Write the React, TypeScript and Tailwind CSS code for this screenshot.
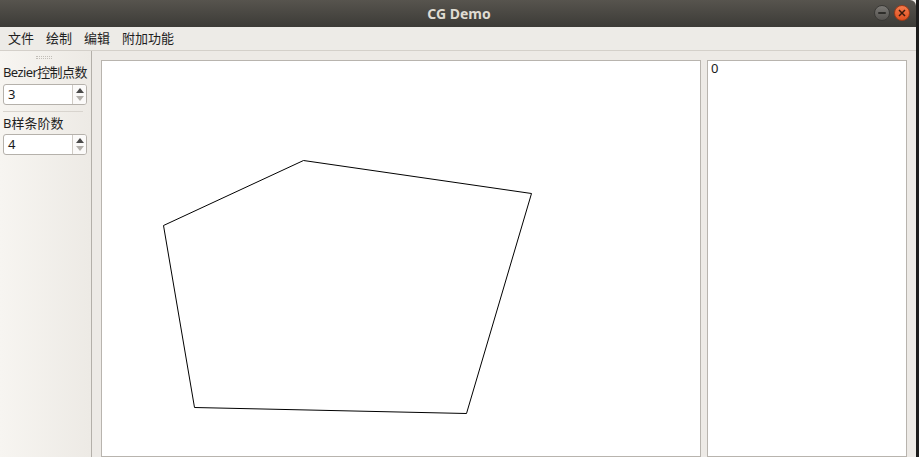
import React from "react";

const font = { fontFamily: '"Noto Sans", "Noto Sans CJK SC", sans-serif' };

function SpinBox({ value }: { value: string }) {
  return (
    <div className="flex h-[21px] w-[84px] rounded-[3px] border border-[#b5b1ab] bg-white overflow-hidden">
      <div className="flex-1 flex items-center pl-[4px] text-[13px] text-[#1a1a1a]">{value}</div>
      <div className="w-[14px] border-l border-[#cfcbc5] flex flex-col items-center justify-center gap-[3px] bg-[#fbfaf9]">
        <div className="w-0 h-0 border-l-[4px] border-r-[4px] border-b-[5px] border-l-transparent border-r-transparent border-b-[#4a4a4a]" />
        <div className="w-0 h-0 border-l-[4px] border-r-[4px] border-t-[5px] border-l-transparent border-r-transparent border-t-[#b3b0ab]" />
      </div>
    </div>
  );
}

export default function App() {
  return (
    <div className="w-[919px] h-[457px] flex overflow-hidden bg-[#1c1c1c]" style={font}>
      <div className="w-[916px] h-[457px] flex flex-col bg-[#edeae6]">
        {/* title bar */}
        <div className="h-[27px] flex items-center justify-center relative rounded-tr-[6px] bg-gradient-to-b from-[#57544e] to-[#3c3b37]">
          <span className="text-[14px] font-bold text-[#dfdbd2] ml-[2px]">CG Demo</span>
          <div className="absolute right-[6px] top-[5px] flex gap-[4px]">
            <div className="w-[16px] h-[16px] rounded-full bg-gradient-to-b from-[#7a7874] to-[#555350] border border-[#3a3936] flex items-center justify-center">
              <div className="w-[8px] h-[2px] bg-[#2e2d2a] rounded" />
            </div>
            <div className="w-[16px] h-[16px] rounded-full bg-gradient-to-b from-[#f47a4b] to-[#e0501f] border border-[#a33a16] flex items-center justify-center text-[#3a1a0c]">
              <svg width="8" height="8" viewBox="0 0 8 8">
                <path d="M1 1 L7 7 M7 1 L1 7" stroke="#3a1a0c" strokeWidth="1.5" />
              </svg>
            </div>
          </div>
        </div>
        {/* menu bar */}
        <div className="h-[24px] flex items-center pl-[2px] text-[13px] text-[#1f1f1f] border-b border-[#d4d0ca] bg-[#edebe7]">
          <span className="px-[6px]">文件</span>
          <span className="px-[6px]">绘制</span>
          <span className="px-[6px]">编辑</span>
          <span className="px-[6px]">附加功能</span>
        </div>
        {/* body */}
        <div className="flex-1 flex">
          <div className="w-[92px] border-r border-[#b3afa9] bg-gradient-to-r from-[#f7f5f1] to-[#edeae5] flex flex-col pl-[3px]">
            <div className="h-[8px] flex justify-center items-end pr-[6px]">
              <div className="w-[16px] h-[3px] border-t border-b border-dotted border-[#c2beb8]" />
            </div>
            <div className="text-[13px] text-[#1f1f1f] mt-[4px] leading-[18px] tracking-[-0.6px]">Bezier控制点数</div>
            <div className="mt-[3px]"><SpinBox value="3" /></div>
            <div className="h-[1px] w-[80px] bg-[#d8d4ce] mt-[6px]" />
            <div className="text-[13px] text-[#1f1f1f] mt-[2px] leading-[18px]">B样条阶数</div>
            <div className="mt-[2px]"><SpinBox value="4" /></div>
          </div>
          <div className="flex-1 flex pt-[9px] pl-[9px] pr-[9px] gap-[6px]">
            <div className="w-[600px] h-full border border-[#b8b4ae] bg-white relative">
              <svg className="absolute left-0 top-0" width="598" height="400" viewBox="0 0 598 400">
                <polygon
                  points="201.5,99.5 429.5,132.5 364.5,352.5 92.5,346.5 61.5,164.5"
                  fill="none"
                  stroke="#000"
                  strokeWidth="1"
                />
              </svg>
            </div>
            <div className="w-[200px] h-full border border-[#b8b4ae] bg-white px-[3px] text-[13px] leading-[15px] text-[#1a1a1a]">
              0
            </div>
          </div>
        </div>
      </div>
    </div>
  );
}
